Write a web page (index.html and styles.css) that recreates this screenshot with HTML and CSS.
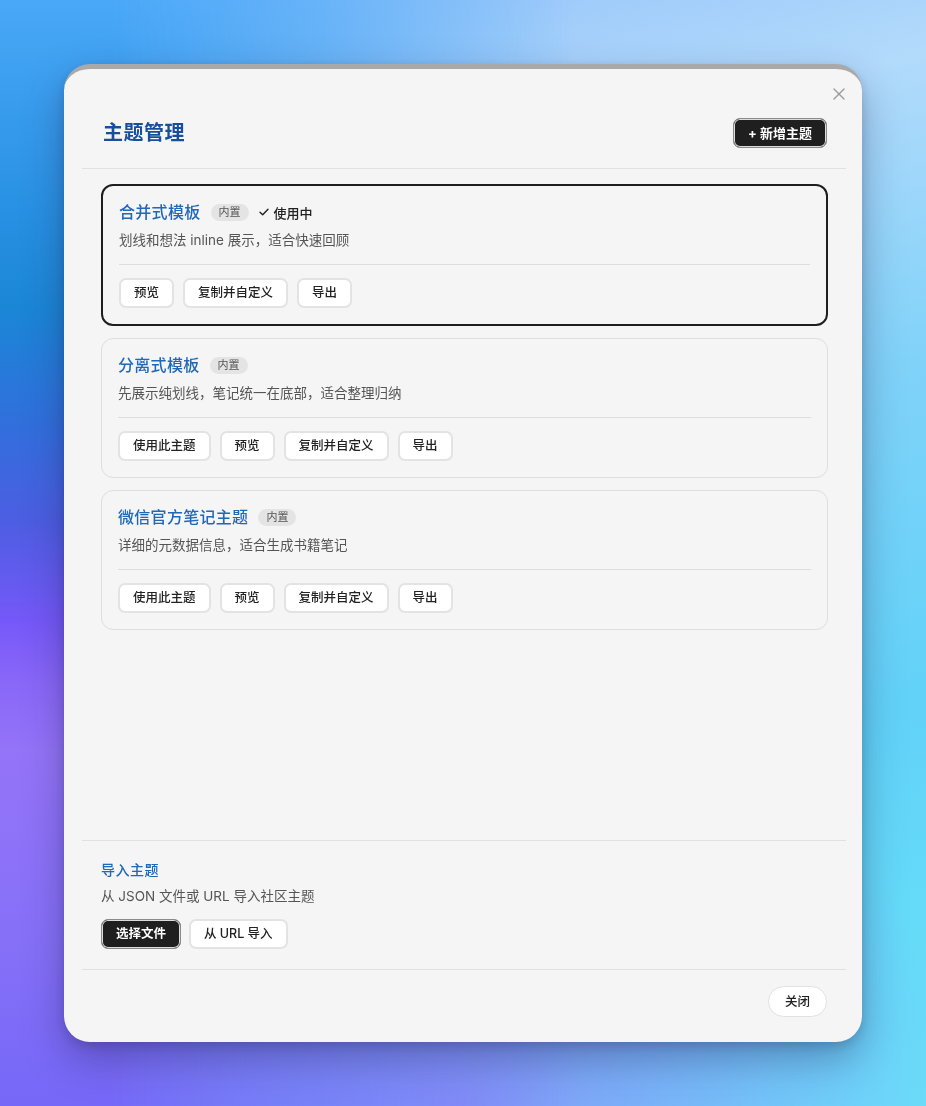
FILE: index.html
```html
<!DOCTYPE html>
<html lang="zh-CN">
<head>
<meta charset="utf-8">
<title>主题管理</title>
<link rel="stylesheet" href="styles.css">
</head>
<body>
<div class="modal">
  <button class="close-x" aria-label="关闭">
    <svg width="12" height="12" viewBox="0 0 12 12"><path d="M1 1L11 11M11 1L1 11" stroke="#9a9a9a" stroke-width="1.4" stroke-linecap="round"/></svg>
  </button>
  <div class="header">
    <h1 class="title">主题管理</h1>
    <button class="btn btn-dark">+ 新增主题</button>
  </div>
  <div class="body">
    <div class="card card-active">
      <div class="card-head">
        <span class="card-title">合并式模板</span>
        <span class="badge">内置</span>
        <span class="in-use">
          <svg width="10" height="8" viewBox="0 0 10 8"><path d="M1 4.2L3.7 6.8L9 1.2" fill="none" stroke="#222" stroke-width="1.4" stroke-linecap="round" stroke-linejoin="round"/></svg>
          使用中
        </span>
      </div>
      <p class="card-desc">划线和想法 inline 展示，适合快速回顾</p>
      <div class="card-actions">
        <button class="btn">预览</button>
        <button class="btn">复制并自定义</button>
        <button class="btn">导出</button>
      </div>
    </div>
    <div class="card">
      <div class="card-head">
        <span class="card-title">分离式模板</span>
        <span class="badge">内置</span>
      </div>
      <p class="card-desc">先展示纯划线，笔记统一在底部，适合整理归纳</p>
      <div class="card-actions">
        <button class="btn">使用此主题</button>
        <button class="btn">预览</button>
        <button class="btn">复制并自定义</button>
        <button class="btn">导出</button>
      </div>
    </div>
    <div class="card">
      <div class="card-head">
        <span class="card-title">微信官方笔记主题</span>
        <span class="badge">内置</span>
      </div>
      <p class="card-desc">详细的元数据信息，适合生成书籍笔记</p>
      <div class="card-actions">
        <button class="btn">使用此主题</button>
        <button class="btn">预览</button>
        <button class="btn">复制并自定义</button>
        <button class="btn">导出</button>
      </div>
    </div>
  </div>
  <div class="import">
    <h2 class="import-title">导入主题</h2>
    <p class="import-desc">从 JSON 文件或 URL 导入社区主题</p>
    <div class="import-actions">
      <button class="btn btn-dark">选择文件</button>
      <button class="btn">从 URL 导入</button>
    </div>
  </div>
  <div class="footer">
    <button class="btn btn-pill">关闭</button>
  </div>
</div>
</body>
</html>
```
FILE: styles.css
```css
* { box-sizing: border-box; }

html, body { height: 100%; }

body {
  margin: 0;
  min-height: 1106px;
  display: flex;
  align-items: center;
  justify-content: center;
  font-family: "Inter", "Noto Sans CJK SC", sans-serif;
  color: #222;
  background:
    radial-gradient(ellipse 55% 35% at 50% 100%, rgba(136, 144, 248, 0.9), rgba(136, 144, 248, 0) 100%),
    linear-gradient(165deg, #8cbcfa 0%, #b2dafb 22%, #80d2f9 45%, #62d2f8 70%, #68e2f9 100%);
  position: relative;
}

body::before {
  content: "";
  position: fixed;
  inset: 0;
  z-index: -1;
  background: linear-gradient(to bottom, #4aa8f8 0%, #2a92e4 18%, #1b86d6 28%, #3070dc 38%, #4c5ee2 47%, #7558f8 56%, #8a68f8 62%, #9474f8 68%, #8670f8 85%, #7668f8 100%);
  -webkit-mask-image: linear-gradient(to right, #000 0%, #000 12%, rgba(0,0,0,0.6) 35%, transparent 62%);
  mask-image: linear-gradient(to right, #000 0%, #000 12%, rgba(0,0,0,0.6) 35%, transparent 62%);
}

.modal {
  position: relative;
  width: 798px;
  height: 978px;
  background: #f5f5f5;
  border-top: 5px solid #a9a9a9;
  border-radius: 26px;
  padding: 0 16px 0 18px;
  display: flex;
  flex-direction: column;
  box-shadow: 0 18px 40px rgba(30, 30, 80, 0.35), 0 4px 12px rgba(0, 0, 0, 0.15);
}

.close-x {
  position: absolute;
  top: 19px;
  right: 17px;
  width: 12px;
  height: 12px;
  padding: 0;
  border: 0;
  background: none;
  display: flex;
}

.header {
  display: flex;
  align-items: center;
  justify-content: space-between;
  padding: 49px 19px 20px 21px;
  border-bottom: 1px solid #e0e0e0;
}

.title {
  margin: 0;
  font-size: 20px;
  line-height: 30px;
  font-weight: 700;
  letter-spacing: 0.5px;
  color: #184f9c;
}

.btn {
  height: 30px;
  padding: 0 13px;
  border: 2px solid #e3e3e3;
  border-radius: 7px;
  background: #fff;
  font-family: inherit;
  font-size: 12.5px;
  font-weight: 500;
  color: #222;
  line-height: 26px;
  white-space: nowrap;
}

.btn-dark {
  background: #1f1f1f;
  color: #fff;
  border: 1px solid #8a8a8a;
  box-shadow: inset 0 0 0 1px #dcdcdc, inset 0 0 0 2px #1f1f1f;
  padding: 0 14px;
  font-weight: 700;
}

.header .btn-dark { font-size: 13px; }

.btn-pill {
  height: 31px;
  border-radius: 16px;
  border: 1px solid #e2e2e2;
  padding: 0 16px;
}

.body {
  flex: 1;
  padding: 15px 18px 0 19px;
  display: flex;
  flex-direction: column;
  gap: 12px;
}

.card {
  border: 1px solid #dedede;
  border-radius: 12px;
  padding: 16px;
  background: #f5f5f5;
}

.card-active {
  border: 2px solid #1e1e1e;
}

.card-head {
  display: flex;
  align-items: center;
  height: 20px;
  gap: 10px;
}

.card-title {
  font-size: 16px;
  line-height: 20px;
  font-weight: 500;
  letter-spacing: 0.3px;
  color: #2068b8;
}

.badge {
  height: 17px;
  padding: 0 8px;
  border-radius: 9px;
  background: #e4e4e4;
  font-size: 11px;
  line-height: 17px;
  color: #555;
}

.in-use {
  display: flex;
  align-items: center;
  gap: 5px;
  font-size: 13px;
  font-weight: 500;
  color: #222;
}

.card-desc {
  margin: 8px 0 0;
  font-size: 13.5px;
  line-height: 20px;
  color: #555;
  padding-bottom: 14px;
  border-bottom: 1px solid #dedede;
}

.card-actions {
  margin-top: 13px;
  display: flex;
  gap: 9px;
}

.import {
  border-top: 1px solid #e0e0e0;
  border-bottom: 1px solid #e0e0e0;
  padding: 19px 0 20px 19px;
}

.import-title {
  margin: 0;
  font-size: 14px;
  line-height: 20px;
  font-weight: 500;
  letter-spacing: 0.5px;
  color: #2068b8;
}

.import-desc {
  margin: 6px 0 0;
  font-size: 13.5px;
  line-height: 20px;
  color: #555;
}

.import-actions {
  margin-top: 13px;
  display: flex;
  gap: 8px;
}

.footer {
  display: flex;
  justify-content: flex-end;
  padding: 16px 19px 25px;
}
```
